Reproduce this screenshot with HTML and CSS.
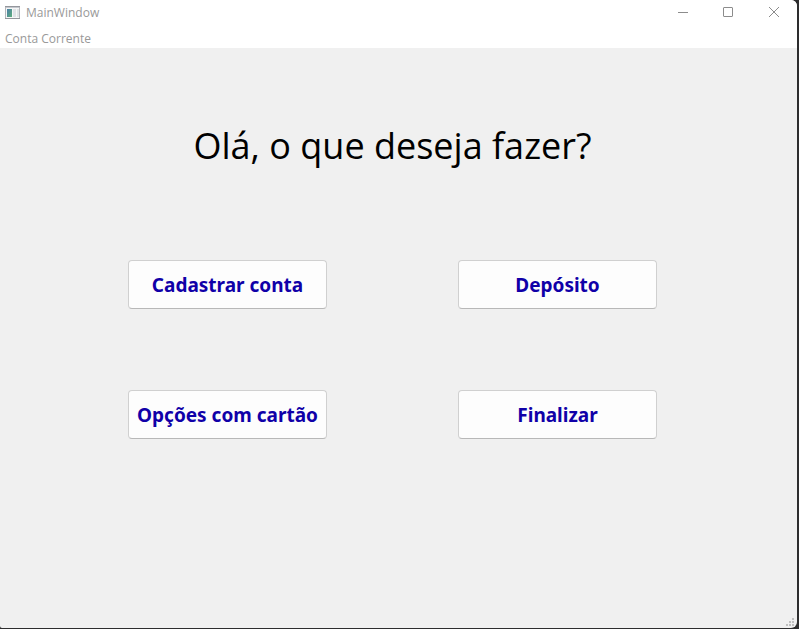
FILE: index.html
```html
<!DOCTYPE html>
<html lang="pt-BR">
<head>
<meta charset="utf-8">
<meta name="viewport" content="width=device-width, initial-scale=1">
<title>MainWindow</title>
<link rel="stylesheet" href="styles.css">
</head>
<body>
<div class="window">
  <header class="titlebar">
    <svg class="app-icon" width="16" height="16" viewBox="0 0 16 16" aria-hidden="true">
      <defs>
        <linearGradient id="pane" x1="0" y1="0" x2="1" y2="1">
          <stop offset="0" stop-color="#4a7fa8"/>
          <stop offset="1" stop-color="#5fae7c"/>
        </linearGradient>
      </defs>
      <rect x="0.5" y="1.5" width="14" height="12" fill="#f6f6f6" stroke="#b4b6bb"/>
      <path d="M0 1.5h15M0 13.5h15" stroke="#94969c"/>
      <path d="M1 2.5h13" stroke="#c4c8ce"/>
      <rect x="2" y="4" width="5" height="8" fill="url(#pane)"/>
      <rect x="8" y="4" width="3" height="8" fill="#dfe2e6"/>
      <rect x="12" y="4" width="2" height="8" fill="#dfe3e5"/>
    </svg>
    <span class="title">MainWindow</span>
    <div class="controls">
      <button type="button" class="control" aria-label="Minimizar">
        <svg width="12" height="12" viewBox="0 0 12 12"><path d="M2 6.5h10"/></svg>
      </button>
      <button type="button" class="control" aria-label="Maximizar">
        <svg width="12" height="12" viewBox="0 0 12 12"><rect x="1.5" y="1.5" width="9" height="9" rx="0.5"/></svg>
      </button>
      <button type="button" class="control" aria-label="Fechar">
        <svg width="12" height="12" viewBox="0 0 12 12"><path d="M1 1l10 10M11 1L1 11"/></svg>
      </button>
    </div>
  </header>
  <nav class="menubar">
    <button type="button" class="menu">Conta Corrente</button>
  </nav>
  <main class="content">
    <h1 class="question">Olá, o que deseja fazer?</h1>
    <div class="actions">
      <button type="button" class="action">Cadastrar conta</button>
      <button type="button" class="action">Depósito</button>
      <button type="button" class="action">Opções com cartão</button>
      <button type="button" class="action">Finalizar</button>
    </div>
  </main>
  <svg class="grip" width="8" height="8" viewBox="0 0 8 8" aria-hidden="true">
    <path d="M6 0h2v2H6zM3 3h2v2H3zM6 3h2v2H6zM0 6h2v2H0zM3 6h2v2H3zM6 6h2v2H6z"/>
  </svg>
</div>
</body>
</html>
```

FILE: styles.css
```css
* {
  box-sizing: border-box;
}

body {
  margin: 0;
  min-height: 100vh;
  display: flex;
  padding: 0 2px 1px 0;
  background: #2d2d2e;
  font-family: "Open Sans", Tahoma, sans-serif;
}

button {
  margin: 0;
  font-family: inherit;
}

.window {
  position: relative;
  flex: 1;
  display: flex;
  flex-direction: column;
  overflow: hidden;
  border-radius: 0 6px 6px 2px;
  background: #f0f0f0;
}

.titlebar {
  display: flex;
  align-items: center;
  height: 25px;
  padding-left: 5px;
  background: #fff;
  color: #999;
  font-size: 12px;
}

.app-icon {
  margin-right: 5px;
}

.controls {
  display: flex;
  align-self: stretch;
  margin-left: auto;
}

.control {
  display: flex;
  align-items: center;
  justify-content: center;
  width: 46px;
  padding: 0 0 1px;
  border: 0;
  background: none;
}

.control svg {
  fill: none;
  stroke: #8c8c8c;
}

.menubar {
  display: flex;
  height: 23px;
  padding-left: 5px;
  background: #fff;
}

.menu {
  padding: 4px 0 0;
  border: 0;
  background: none;
  color: #999;
  font-size: 12px;
}

.content {
  flex: 1;
  display: flex;
  flex-direction: column;
  align-items: center;
  padding: 68px 12px 0 0;
}

.question {
  margin: 0 0 84px;
  color: #000;
  font-size: 36px;
  font-weight: 400;
  line-height: 60px;
}

.actions {
  display: grid;
  grid-template-columns: repeat(2, 199px);
  gap: 81px 131px;
}

.action {
  height: 49px;
  padding: 0;
  border: 1px solid #d0d0d0;
  border-bottom-color: #b8b8b8;
  border-radius: 4px;
  background: #fdfdfd;
  color: #1000a8;
  font-family: "Noto Sans", Tahoma, sans-serif;
  font-size: 19px;
  font-weight: 700;
  white-space: nowrap;
}

.grip {
  position: absolute;
  right: 3px;
  bottom: 2px;
  fill: #bfbfbf;
}
```
